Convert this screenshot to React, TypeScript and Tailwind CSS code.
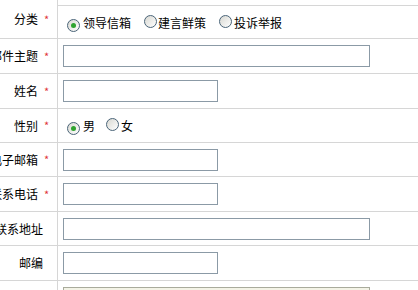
import React from "react";

const font = { fontFamily: '"Noto Sans CJK SC", "Noto Sans", sans-serif' };

function Radio({ checked }: { checked?: boolean }) {
  return (
    <span className="inline-flex h-[13px] w-[13px] shrink-0 items-center justify-center rounded-full border border-[#4a6478] bg-gradient-to-br from-[#d8d8d2] to-white">
      {checked && <span className="h-[5px] w-[5px] rounded-full bg-[#2fa32f]" />}
    </span>
  );
}

function Label({ text, required }: { text: string; required?: boolean }) {
  return (
    <div className="flex w-[58px] shrink-0 items-center justify-end whitespace-nowrap border-r border-[#d6d6d6] pr-[7px] text-[12px] text-black">
      <span className="shrink-0">{text}</span>
      {required ? (
        <span className="ml-[6px] w-[6px] shrink-0 text-[11px] leading-none text-[#e0353a]">*</span>
      ) : (
        <span className="w-[7px] shrink-0" />
      )}
    </div>
  );
}

function TextInput({ wide }: { wide?: boolean }) {
  return (
    <input
      className={
        wide
          ? "ml-[5px] h-[22px] w-[307px] border border-[#8b9aa6] bg-white outline-none"
          : "ml-[5px] h-[22px] w-[155px] border border-[#8b9aa6] bg-white outline-none"
      }
    />
  );
}

export default function App() {
  return (
    <div className="h-[290px] w-[418px] overflow-hidden bg-white" style={font}>
      {/* 分类 */}
      <div className="flex h-[39px] border-b border-[#d6d6d6]">
        <Label text="分类" required />
        <div className="mt-[5px] flex flex-1 items-center border-t border-[#d6d6d6] pt-[1px] text-[12px] text-black">
          <span className="ml-[9px]"><Radio checked /></span>
          <span className="ml-[3px]">领导信箱</span>
          <span className="ml-[13px]"><Radio /></span>
          <span className="ml-[1px]">建言鲜策</span>
          <span className="ml-[13px]"><Radio /></span>
          <span className="ml-[2px]">投诉举报</span>
        </div>
      </div>

      <div className="flex h-[35px] border-b border-[#d6d6d6]">
        <Label text="邮件主题" required />
        <div className="flex flex-1 items-center">
          <TextInput wide />
        </div>
      </div>

      <div className="flex h-[35px] border-b border-[#d6d6d6]">
        <Label text="姓名" required />
        <div className="flex flex-1 items-center">
          <TextInput />
        </div>
      </div>

      <div className="flex h-[34px] border-b border-[#d6d6d6]">
        <Label text="性别" required />
        <div className="flex flex-1 items-center text-[12px] text-black">
          <span className="ml-[9px]"><Radio checked /></span>
          <span className="ml-[3px]">男</span>
          <span className="ml-[11px]"><Radio /></span>
          <span className="ml-[2px]">女</span>
        </div>
      </div>

      <div className="flex h-[34px] border-b border-[#d6d6d6]">
        <Label text="电子邮箱" required />
        <div className="flex flex-1 items-center">
          <TextInput />
        </div>
      </div>

      <div className="flex h-[35px] border-b border-[#d6d6d6]">
        <Label text="联系电话" required />
        <div className="flex flex-1 items-center">
          <TextInput />
        </div>
      </div>

      <div className="flex h-[34px] border-b border-[#d6d6d6]">
        <Label text="联系地址" />
        <div className="flex flex-1 items-center">
          <TextInput wide />
        </div>
      </div>

      <div className="flex h-[35px] border-b border-[#d6d6d6]">
        <Label text="邮编" />
        <div className="flex flex-1 items-center">
          <TextInput />
        </div>
      </div>

      <div className="flex h-[40px]">
        <Label text="内容" required />
        <div className="flex-1 pt-[6px]">
          <textarea className="ml-[5px] h-[80px] w-[307px] resize-none border border-[#a9ab9c] bg-[#f3f3e6] outline-none" />
        </div>
      </div>
    </div>
  );
}
